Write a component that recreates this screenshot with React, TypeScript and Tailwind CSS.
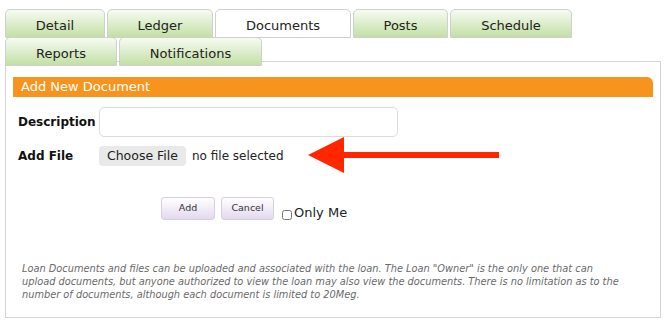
const font = { fontFamily: '"DejaVu Sans", Verdana, sans-serif' };

type Tab = { label: string; width: string; active?: boolean };

const rowOne: Tab[] = [
  { label: "Detail", width: "w-[100px]" },
  { label: "Ledger", width: "w-[106px]" },
  { label: "Documents", width: "w-[136px]", active: true },
  { label: "Posts", width: "w-[95px]" },
  { label: "Schedule", width: "w-[122px]" },
];

const rowTwo: Tab[] = [
  { label: "Reports", width: "w-[112px]" },
  { label: "Notifications", width: "w-[143px]" },
];

function TabButton({ tab }: { tab: Tab }) {
  return (
    <div
      className={`flex h-[29px] items-center justify-center rounded-t-[5px] border border-[#cfcfcf] pt-[4px] text-[13px] text-[#222] ${tab.width} ${
        tab.active ? "bg-white" : "bg-gradient-to-b from-[#f7fbf2] to-[#c3dfa4]"
      }`}
    >
      {tab.label}
    </div>
  );
}

function SmallButton({ label, width }: { label: string; width: string }) {
  return (
    <button
      type="button"
      className={`h-[23px] ${width} rounded-[3px] border border-[#d6d0dc] bg-gradient-to-b from-white to-[#e4d9ef] text-[9.5px] text-[#333]`}
    >
      {label}
    </button>
  );
}

export default function App() {
  return (
    <div className="min-h-[327px] w-[670px] bg-white px-[5px] pt-[9px] text-[#111]" style={font}>
      <div className="relative z-10 flex gap-[2px]">
        {rowOne.map((t) => (
          <TabButton key={t.label} tab={t} />
        ))}
      </div>
      <div className="relative z-10 -mt-[1px] flex gap-[2px]">
        {rowTwo.map((t) => (
          <TabButton key={t.label} tab={t} />
        ))}
      </div>

      <section className="relative -mt-[5px] h-[257px] w-[656px] border border-[#d4d4d4] px-[7px] pt-[15px]">
        <div className="flex h-[20px] items-center rounded-tr-[6px] bg-[#f7941d] pl-[8px] text-[13px] text-white">
          Add New Document
        </div>

        <div className="mt-[10px] flex items-center pl-[5px]">
          <label className="w-[81px] text-[12px] font-bold">Description</label>
          <input className="h-[30px] w-[299px] rounded-[5px] border border-[#dcdcdc] bg-white px-2 text-[13px] outline-none" />
        </div>

        <div className="mt-[9px] flex items-center pl-[5px]">
          <label className="w-[81px] text-[12px] font-bold">Add File</label>
          <span className="flex h-[20px] w-[87px] items-center justify-center rounded-[4px] bg-[#e9e9e9] text-[12.5px] text-[#222]">
            Choose File
          </span>
          <span className="ml-[6px] text-[12px] text-[#222]">no file selected</span>
        </div>

        <div className="mt-[28px] flex items-end pl-[148px]">
          <SmallButton label="Add" width="w-[54px]" />
          <div className="ml-[6px]">
            <SmallButton label="Cancel" width="w-[53px]" />
          </div>
          <label className="-mb-[3px] ml-[8px] flex items-center text-[13px] text-[#222]">
            <input type="checkbox" className="mt-[4px] h-[10px] w-[10px] accent-white" />
            <span className="ml-[2px]">Only Me</span>
          </label>
        </div>

        <p className="mt-[42px] whitespace-nowrap pl-[9px] text-[9.8px] italic leading-[13px] text-[#6a6a6a]">
          Loan Documents and files can be uploaded and associated with the loan. The Loan "Owner" is the only one that
          can
          <br />
          upload documents, but anyone authorized to view the loan may also view the documents. There is no limitation
          as to the
          <br />
          number of documents, although each document is limited to 20Meg.
        </p>

        <svg
          className="absolute left-[302px] top-[74px]"
          width="192"
          height="38"
          viewBox="0 0 192 38"
        >
          <polygon points="0,19 36,1 36,37" fill="#ff2600" />
          <rect x="35" y="16" width="156" height="6" fill="#ff2600" />
        </svg>
      </section>
    </div>
  );
}
